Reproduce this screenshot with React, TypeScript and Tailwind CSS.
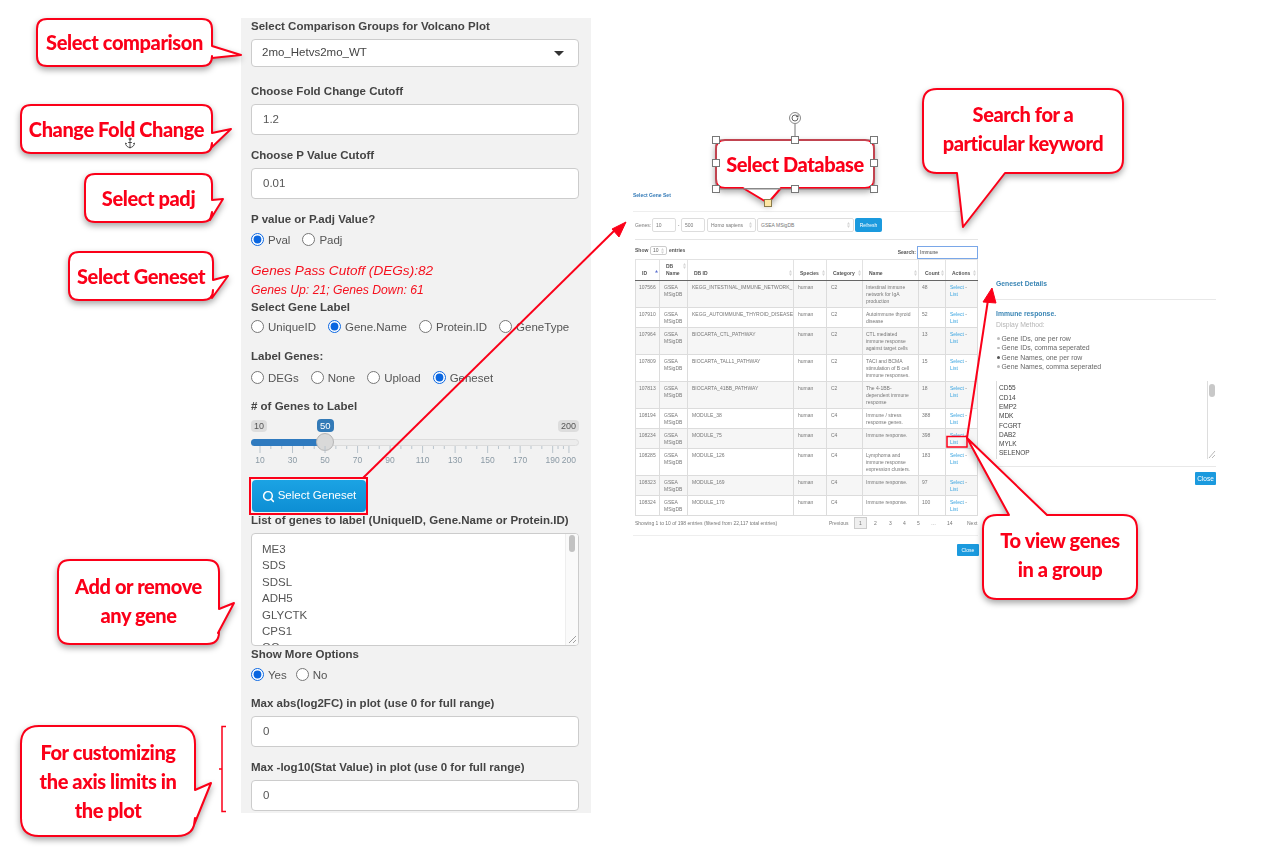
import { Anchor, RotateCw, Search } from "lucide-react"

const RED = "#fb0019"

// rounded box with a tail spliced into one side, all in page coordinates
const bubble = (x1: number, y1: number, x2: number, y2: number, r: number, side: "top" | "right" | "bottom", tail: number[][]) => {
  const pts = tail.map((p) => `L${p[0]} ${p[1]}`).join(" ")
  return [
    `M${x1 + r} ${y1}`,
    side === "top" ? pts : "",
    `L${x2 - r} ${y1} Q${x2} ${y1} ${x2} ${y1 + r}`,
    side === "right" ? pts : "",
    `L${x2} ${y2 - r} Q${x2} ${y2} ${x2 - r} ${y2}`,
    side === "bottom" ? pts : "",
    `L${x1 + r} ${y2} Q${x1} ${y2} ${x1} ${y2 - r} L${x1} ${y1 + r} Q${x1} ${y1} ${x1 + r} ${y1} Z`,
  ].join(" ")
}

const shapes = [
  bubble(37, 19, 212, 66, 10, "right", [[212, 46], [241, 55], [212, 58]]),
  bubble(21, 105, 212, 153, 10, "right", [[212, 133], [231, 129], [211, 148]]),
  bubble(85, 174, 212, 222, 10, "right", [[212, 200], [223, 199], [210, 220]]),
  bubble(69, 252, 213, 300, 10, "right", [[213, 280], [228, 276], [212, 298]]),
  bubble(58, 560, 219, 644, 12, "right", [[219, 609], [234, 603], [218, 633]]),
  bubble(21, 726, 195, 836, 18, "right", [[195, 790], [211, 783], [194, 825]]),
  bubble(923, 89, 1123, 173, 14, "bottom", [[1005, 173], [963, 227], [957, 173]]),
  bubble(983, 515, 1137, 599, 14, "top", [[1009, 515], [967, 438], [1047, 515]]),
  bubble(716, 140, 874, 188, 9, "bottom", [[781, 188], [768, 203], [743, 188]]),
]

const callouts = [
  { box: "left-[37px] top-[19px] w-[175px] h-[47px]", lines: ["Select comparison"] },
  { box: "left-[21px] top-[105px] w-[191px] h-[48px]", lines: ["Change Fold Change"] },
  { box: "left-[85px] top-[174px] w-[127px] h-[48px]", lines: ["Select padj"] },
  { box: "left-[69px] top-[252px] w-[144px] h-[48px]", lines: ["Select Geneset"] },
  { box: "left-[58px] top-[560px] w-[161px] h-[82px]", lines: ["Add or remove", "any gene"] },
  { box: "left-[21px] top-[726px] w-[174px] h-[110px]", lines: ["For customizing", "the axis limits in", "the plot"] },
  { box: "left-[923px] top-[89px] w-[200px] h-[80px]", lines: ["Search for a", "particular keyword"] },
  { box: "left-[983px] top-[515px] w-[154px] h-[80px]", lines: ["To view genes", "in a group"] },
  { box: "left-[716px] top-[140px] w-[158px] h-[48px]", lines: ["Select Database"] },
]

const handles = [
  "left-[712px] top-[136px]", "left-[791px] top-[136px]", "left-[870px] top-[136px]",
  "left-[712px] top-[159px]", "left-[870px] top-[159px]",
  "left-[712px] top-[185px]", "left-[791px] top-[185px]", "left-[870px] top-[185px]",
]

const rows = [
  ["107566", "KEGG_INTESTINAL_IMMUNE_NETWORK_", "C2", "Intestinal immune network for IgA production", "48"],
  ["107910", "KEGG_AUTOIMMUNE_THYROID_DISEASE", "C2", "Autoimmune thyroid disease", "52"],
  ["107964", "BIOCARTA_CTL_PATHWAY", "C2", "CTL mediated immune response against target cells", "13"],
  ["107809", "BIOCARTA_TALL1_PATHWAY", "C2", "TACI and BCMA stimulation of B cell immune responses.", "15"],
  ["107813", "BIOCARTA_41BB_PATHWAY", "C2", "The 4-1BB-dependent immune response", "18"],
  ["108194", "MODULE_38", "C4", "Immune / stress response genes.", "388"],
  ["108234", "MODULE_75", "C4", "Immune response.", "398"],
  ["108285", "MODULE_126", "C4", "Lymphoma and immune response expression clusters.", "183"],
  ["108323", "MODULE_169", "C4", "Immune response.", "97"],
  ["108324", "MODULE_170", "C4", "Immune response.", "100"],
]

const headers = [
  { label: "ID", w: "w-[24px]" },
  { label: "DB Name", w: "w-[28px]" },
  { label: "DB ID", w: "w-[106px]" },
  { label: "Species", w: "w-[33px]" },
  { label: "Category", w: "w-[36px]" },
  { label: "Name", w: "w-[56px]" },
  { label: "Count", w: "w-[27px]" },
  { label: "Actions", w: "w-[32px]" },
]

// three divisions between the labelled ticks, then the last stretch up to 200
const tickValues = Array.from({ length: 28 }, (_, i) => 10 + (i * 20) / 3).concat([193.3, 196.6, 200])
const sliderLabels = [10, 30, 50, 70, 90, 110, 130, 150, 170, 190, 200]

const Label = ({ children, className = "" }: { children: string; className?: string }) => (
  <p className={"h-4 leading-4 text-[11.5px] font-bold text-[#444] whitespace-nowrap " + className}>{children}</p>
)

const TextBox = ({ value, className = "" }: { value: string; className?: string }) => (
  <div className={"h-[31px] w-[328px] flex items-center pl-[11px] bg-white border border-[#ccc] rounded text-[11.5px] text-[#555] " + className}>{value}</div>
)

const Radios = ({ items, checked, gap, className = "" }: { items: string[]; checked: string; gap: string; className?: string }) => (
  <div className={"flex items-center h-4 text-[11.5px] text-[#555] " + gap + " " + className}>
    {items.map((item) => (
      <label key={item} className="flex items-center gap-[4px] pt-px">
        <input type="radio" readOnly checked={item === checked} className="m-0 -mt-[2px] accent-[#0a66e0]" />
        {item}
      </label>
    ))}
  </div>
)

const SortMark = ({ active = false }: { active?: boolean }) => (
  <svg width="3" height="6" viewBox="0 0 3 6" className="shrink-0">
    <path d="M1.5 0 3 2.400H0z" fill={active ? "#5a6fd0" : "#d5d5d5"} />
    {!active && <path d="M1.5 6 0 3.600h3z" fill="#d5d5d5" />}
  </svg>
)

const MiniBox = ({ children, className = "" }: { children: string; className?: string }) => (
  <div className={"h-[14px] flex items-center pl-[3px] bg-white border border-[#ddd] rounded-[2px] text-[#777] " + className}>{children}</div>
)

const MiniSelect = ({ children, className = "" }: { children: string; className?: string }) => (
  <div className={"h-[14px] flex items-center justify-between px-[3px] bg-white border border-[#ddd] rounded-[2px] text-[#777] " + className}>
    {children}
    <SortMark />
  </div>
)

const App = () => {
  return (
    <div className="relative flex items-start w-[1288px] h-[858px] overflow-hidden bg-white font-['Liberation_Sans',sans-serif]">
      {/* volcano plot options */}
      <section className="ml-[241px] mt-[18px] w-[350px] shrink-0 pl-[10px] pb-[2px] bg-[#f2f2f2] blur-[0.3px]">
        <Label>Select Comparison Groups for Volcano Plot</Label>
        <div className="mt-[5px] h-[28px] w-[328px] flex items-center justify-between pl-[10px] pr-[14px] bg-white border border-[#ccc] rounded text-[11.5px] text-[#444]">
          2mo_Hetvs2mo_WT
          <svg width="10" height="5" viewBox="0 0 10 5"><path d="M0 0h10L5 5z" fill="#333" /></svg>
        </div>

        <Label className="mt-4">Choose Fold Change Cutoff</Label>
        <TextBox value="1.2" className="mt-[5px]" />
        <Label className="mt-3">Choose P Value Cutoff</Label>
        <TextBox value="0.01" className="mt-[5px]" />

        <Label className="mt-3">P value or P.adj Value?</Label>
        <Radios items={["Pval", "Padj"]} checked="Pval" gap="gap-[12px]" className="mt-[5px]" />
        <p className="mt-[15px] h-4 leading-4 text-[13.6px] italic text-[#f5101e]">Genes Pass Cutoff (DEGs):82</p>
        <p className="mt-[3px] h-4 leading-4 text-[12.2px] italic text-[#f5101e]">Genes Up: 21; Genes Down: 61</p>

        <Label className="mt-px">Select Gene Label</Label>
        <Radios items={["UniqueID", "Gene.Name", "Protein.ID", "GeneType"]} checked="Gene.Name" gap="gap-[12px]" className="mt-1" />
        <Label className="mt-[13px]">Label Genes:</Label>
        <Radios items={["DEGs", "None", "Upload", "Geneset"]} checked="Geneset" gap="gap-[12px]" className="mt-[6px]" />

        <Label className="mt-3"># of Genes to Label</Label>
        <div className="relative mt-[5px] h-[49px] w-[328px]">
          <span className="absolute left-0 top-[1px] px-[3px] h-[12px] leading-[12px] rounded-sm bg-[#ddd] text-[9px] text-[#555]">10</span>
          <span className="absolute left-[66px] top-0 px-[3px] h-[13px] leading-[13px] rounded-sm bg-[#337ab7] text-[9.5px] text-white">50</span>
          <span className="absolute right-0 top-[1px] px-[3px] h-[12px] leading-[12px] rounded-sm bg-[#ddd] text-[9px] text-[#555]">200</span>
          <div className="absolute left-0 top-[20px] h-[7px] w-[328px] rounded-full bg-[#ececec] border border-[#dcdcdc]" />
          <div className="absolute left-0 top-[20px] h-[7px] w-[74px] rounded-l-full bg-[#2f7abf]" />
          <div className="absolute left-[65px] top-[14px] h-[18px] w-[18px] rounded-full bg-[#d9d9d9] border border-[#b5b5b5]" />
          <svg width="328" height="8" viewBox="0 0 328 8" className="absolute left-0 top-[27px]">
            {tickValues.map((v, i) => (
              <line key={v} x1={9 + (v - 10) * 1.626} x2={9 + (v - 10) * 1.626} y1="0" y2={i % 3 === 0 || v === 200 ? 7 : 3} stroke="#b9c4cc" strokeWidth="1" />
            ))}
          </svg>
          {sliderLabels.map((v) => (
            <span key={v} className="absolute top-[36px] -translate-x-1/2 text-[8.5px] leading-[10px] text-[#8b9aa5]" style={{ left: 9 + (v - 10) * 1.626 }}>{v}</span>
          ))}
        </div>

        <button className="mt-3 h-[32px] w-[114px] ml-px flex items-center justify-center gap-[3px] rounded-sm bg-gradient-to-b from-[#1ba3e4] to-[#0d8ed4] text-[11.5px] text-white">
          <Search size={13} strokeWidth={2.75} />
          Select Geneset
        </button>

        <Label>List of genes to label (UniqueID, Gene.Name or Protein.ID)</Label>
        <div className="relative mt-[5px] h-[113px] w-[328px] overflow-hidden pl-[10px] pt-[7px] bg-white border border-[#ccc] rounded text-[11.5px] leading-[16.4px] text-[#555]">
          {["ME3", "SDS", "SDSL", "ADH5", "GLYCTK", "CPS1", "GC"].map((g) => <div key={g}>{g}</div>)}
          <div className="absolute right-0 top-0 bottom-0 w-[13px] bg-[#fafafa] border-l border-[#eee]" />
          <div className="absolute right-[3px] top-[1px] h-[17px] w-[6px] rounded-full bg-[#c2c2c2]" />
          <svg width="10" height="10" viewBox="0 0 10 10" className="absolute right-[1px] bottom-[1px]">
            <path d="M9 2 2 9M9 6 6 9" stroke="#888" strokeWidth="0.8" />
          </svg>
        </div>

        <Label>Show More Options</Label>
        <Radios items={["Yes", "No"]} checked="Yes" gap="gap-[9px]" className="mt-[5px]" />
        <Label className="mt-3">Max abs(log2FC) in plot (use 0 for full range)</Label>
        <TextBox value="0" className="mt-[5px]" />
        <Label className="mt-3">Max -log10(Stat Value) in plot (use 0 for full range)</Label>
        <TextBox value="0" className="mt-[5px]" />
      </section>

      {/* gene set modal */}
      <section className="ml-[42px] mt-[190px] w-[345px] shrink-0 text-[5px] leading-[7px] text-[#777] blur-[0.3px]">
        <p className="h-[10px] leading-[10px] font-bold text-[#337ab7]">Select Gene Set</p>
        <div className="mt-[11px] h-px bg-[#eee]" />
        <div className="mt-[6px] pl-[2px] flex items-center">
          <span className="w-[17px]">Genes:</span>
          <MiniBox className="w-[24px]">10</MiniBox>
          <span className="w-[5px] text-center">-</span>
          <MiniBox className="w-[24px]">500</MiniBox>
          <MiniSelect className="ml-[2px] w-[49px]">Homo sapiens</MiniSelect>
          <MiniSelect className="ml-px w-[97px]">GSEA MSigDB</MiniSelect>
          <div className="ml-px h-[14px] w-[27px] flex items-center justify-center rounded-[2px] bg-[#1b9ade] text-white">Refresh</div>
        </div>
        <div className="mt-[7px] ml-[2px] h-px bg-[#e5e5e5]" />
        <div className="mt-[6px] pl-[2px] h-[13px] flex items-start font-bold text-[#555]">
          <span className="w-[15px] leading-[9px]">Show</span>
          <div className="h-[9px] w-[17px] flex items-center justify-between px-[2px] border border-[#ccc] rounded-[2px] font-normal text-[#666]">10<SortMark /></div>
          <span className="ml-[2px] leading-[9px]">entries</span>
          <span className="ml-auto mt-[3px] pr-px">Search:</span>
          <div className="h-[13px] w-[61px] flex items-center pl-[2px] border border-[#7aa7e8] font-normal text-[#444]">Immune</div>
        </div>

        <table className="ml-[2px] w-[342px] table-fixed border-collapse">
          <thead>
            <tr className="h-[21px] text-[#555]">
              {headers.map((h, i) => (
                <th key={h.label} className={h.w + " border border-[#e2e2e2] border-b-[#666] pl-[6px] pr-px font-bold text-left align-bottom pb-[3px]"}>
                  <div className="flex items-start justify-between gap-px">
                    <span className="flex-1">{h.label}</span>
                    <SortMark active={i === 0} />
                  </div>
                </th>
              ))}
            </tr>
          </thead>
          <tbody>
            {rows.map((r, i) => (
              <tr key={r[0]} className={i % 2 === 0 ? "bg-[#f6f6f6]" : "bg-white"}>
                <td className="border border-[#dcdcdc] px-[3px] pt-[3px] pb-[2px] align-top">{r[0]}</td>
                <td className="border border-[#dcdcdc] px-[4px] pt-[3px] pb-[2px] align-top">GSEA MSigDB</td>
                <td className="border border-[#dcdcdc] px-[4px] pt-[3px] pb-[2px] align-top whitespace-nowrap overflow-hidden">{r[1]}</td>
                <td className="border border-[#dcdcdc] px-[4px] pt-[3px] pb-[2px] align-top">human</td>
                <td className="border border-[#dcdcdc] px-[4px] pt-[3px] pb-[2px] align-top">{r[2]}</td>
                <td className="border border-[#dcdcdc] px-[3px] pt-[3px] pb-[2px] align-top">{r[3]}</td>
                <td className="border border-[#dcdcdc] px-[3px] pt-[3px] pb-[2px] align-top">{r[4]}</td>
                <td className="border border-[#dcdcdc] px-[4px] pt-[3px] pb-[2px] align-top">
                  <span className="text-[#3ba5e0]">Select</span> - <span className="text-[#3ba5e0]">List</span>
                </td>
              </tr>
            ))}
          </tbody>
        </table>

        <div className="mt-[1px] ml-[2px] flex items-center h-[12px]">
          <span className="w-[194px] whitespace-nowrap">Showing 1 to 10 of 198 entries (filtered from 22,117 total entries)</span>
          <span className="w-[25px]">Previous</span>
          <span className="h-[12px] w-[13px] flex items-center justify-center border border-[#ccc] bg-[#efefef]">1</span>
          <span className="ml-[7px] w-[15px]">2</span>
          <span className="w-[14px]">3</span>
          <span className="w-[14px]">4</span>
          <span className="w-[14px]">5</span>
          <span className="w-[16px]">…</span>
          <span className="w-[20px]">14</span>
          <span>Next</span>
        </div>
        <div className="mt-[6px] h-px bg-[#eee]" />
        <div className="mt-[8px] mr-[-1px] flex justify-end">
          <div className="h-[12px] w-[22px] flex items-center justify-center rounded-[1px] bg-[#1b9ade] text-white">Close</div>
        </div>
      </section>

      {/* geneset details */}
      <section className="ml-[18px] mt-[279px] w-[220px] shrink-0 blur-[0.3px]">
        <p className="h-[10px] leading-[10px] text-[6.8px] font-bold text-[#3b86b5]">Geneset Details</p>
        <div className="mt-[10px] h-px bg-[#e8e8e8]" />
        <p className="mt-[9px] h-[10px] leading-[10px] text-[6.8px] font-bold text-[#3b86b5]">Immune response.</p>
        <p className="mt-[1px] h-[10px] leading-[10px] text-[6.8px] text-[#b5b5b5]">Display Method:</p>
        <ul className="mt-[4px] text-[6.9px] leading-[9.33px] text-[#666]">
          {["Gene IDs, one per row", "Gene IDs, comma seperated", "Gene Names, one per row", "Gene Names, comma seperated"].map((m, i) => (
            <li key={m} className="flex items-center gap-[2px] pl-px">
              <span className={"h-[2.5px] w-[2.5px] rounded-full " + (i === 2 ? "bg-[#555]" : "bg-[#bbb]")} />
              {m}
            </li>
          ))}
        </ul>
        <div className="relative mt-[10px] h-[78px] overflow-hidden pl-[2px] pt-[2px] border-l border-[#ddd] text-[6.5px] leading-[9.3px] text-[#444]">
          {["CD55", "CD14", "EMP2", "MDK", "FCGRT", "DAB2", "MYLK", "SELENOP", "SCARB1"].map((g) => <div key={g}>{g}</div>)}
          <div className="absolute right-0 top-0 bottom-0 w-[9px] border-l border-[#ddd] bg-white" />
          <div className="absolute right-[1px] top-[3px] h-[13px] w-[6px] rounded-full bg-[#c8c8c8]" />
          <svg width="9" height="11" viewBox="0 0 9 11" className="absolute right-0 bottom-0">
            <path d="M8 3 2 10M8 7 5 10" stroke="#888" strokeWidth="0.6" />
          </svg>
        </div>
        <div className="mt-[7px] h-px bg-[#e8e8e8]" />
        <div className="mt-[5px] flex justify-end">
          <div className="h-[13px] w-[21px] flex items-center justify-center rounded-[1px] bg-[#1b9ade] text-[6.5px] text-white">Close</div>
        </div>
      </section>

      {/* annotations on top of the screenshots */}
      <svg width="1288" height="858" viewBox="0 0 1288 858" className="absolute left-0 top-0 pointer-events-none">
        {shapes.map((d) => (
          <path key={d} d={d} fill="#fff" stroke={RED} strokeWidth="2" strokeLinejoin="round" className="drop-shadow-[0_3px_3px_rgba(0,0,0,0.35)]" />
        ))}
        <path d="M226 726.500h-4V811.500h4M219 769h3" fill="none" stroke={RED} strokeWidth="1.500" />
        <rect x="250" y="478" width="117" height="36" fill="none" stroke={RED} strokeWidth="2" />
        <rect x="947" y="436.500" width="20" height="10.500" fill="none" stroke={RED} strokeWidth="1.500" />
        <path d="M363 478 616 229" stroke={RED} strokeWidth="2" />
        <path d="M626 222 612 229 619 237z" fill={RED} stroke={RED} strokeWidth="1" />
        <path d="M967 438 988 300" stroke={RED} strokeWidth="2" />
        <path d="M992 288 983 302 996 303z" fill={RED} stroke={RED} strokeWidth="1" />
        <rect x="716" y="140" width="158" height="49" fill="none" stroke="#888" strokeWidth="1" />
        <path d="M744 188.500H780" stroke="#888" strokeWidth="1" />
        <path d="M795 124V136" stroke="#777" strokeWidth="1" />
      </svg>

      {callouts.map((c) => (
        <div key={c.lines[0]} className={"absolute flex flex-col items-center justify-center font-['Lato',sans-serif] font-black text-[20px] leading-[29px] tracking-[-0.4px] text-[#fb0019] whitespace-nowrap " + c.box}>
          {c.lines.map((l) => <span key={l}>{l}</span>)}
        </div>
      ))}

      {handles.map((h) => (
        <span key={h} className={"absolute h-[8px] w-[8px] bg-white border border-[#777] " + h} />
      ))}
      <span className="absolute left-[764px] top-[199px] h-[8px] w-[8px] bg-[#fde7a5] border border-[#8a7a4a]" />
      <span className="absolute left-[789px] top-[112px] h-[12px] w-[12px] flex items-center justify-center rounded-full bg-white border border-[#888] text-[#444]">
        <RotateCw size={8} strokeWidth={2.5} />
      </span>
      <Anchor size={12} strokeWidth={1.5} className="absolute left-[124px] top-[137px] text-[#222]" />
    </div>
  )
}

export default App
